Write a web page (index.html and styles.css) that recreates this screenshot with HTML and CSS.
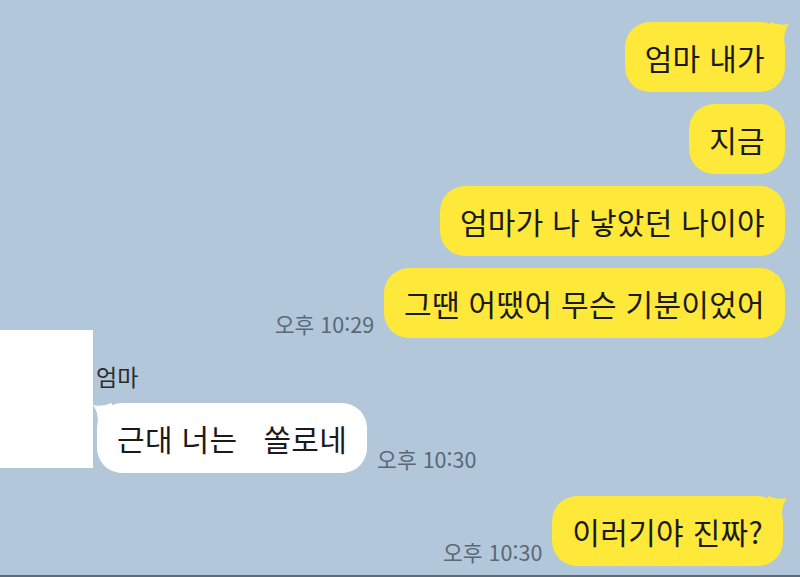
FILE: index.html
```html
<!DOCTYPE html>
<html lang="ko">

<head>
	<meta charset="UTF-8">
	<meta name="viewport" content="width=device-width, initial-scale=1.0">
	<title>채팅</title>
	<link rel="stylesheet" href="styles.css">
</head>

<body>
	<div class="screen">
		<div class="row me">
			<div class="bubble yellow tail">엄마 내가<svg class="horn" viewBox="0 0 20 20"><path d="M0 0 Q10 4 19 2 Q14 8 14 20 L0 20 Z"/></svg></div>
		</div>
		<div class="row me">
			<div class="bubble yellow">지금</div>
		</div>
		<div class="row me">
			<div class="bubble yellow">엄마가 나 낳았던 나이야</div>
		</div>
		<div class="row me">
			<span class="time">오후 10:29</span>
			<div class="bubble yellow">그땐 어땠어 무슨 기분이었어</div>
		</div>

		<div class="other">
			<div class="avatar"></div>
			<div class="other-body">
				<div class="name">엄마</div>
				<div class="row you">
					<div class="bubble white tail">근대 너는   쏠로네<svg class="horn" viewBox="0 0 20 20"><path d="M0 0 Q10 4 19 2 Q14 8 14 20 L0 20 Z"/></svg></div>
					<span class="time">오후 10:30</span>
				</div>
			</div>
		</div>

		<div class="row me last">
			<span class="time">오후 10:30</span>
			<div class="bubble yellow tail">이러기야 진짜?<svg class="horn" viewBox="0 0 20 20"><path d="M0 0 Q10 4 19 2 Q14 8 14 20 L0 20 Z"/></svg></div>
		</div>
	</div>
</body>

</html>
```

FILE: styles.css
```css
* {
	box-sizing: border-box;
}

body {
	margin: 0;
	background-color: #b2c7d9;
	font-family: "Noto Sans CJK KR", "Noto Sans", sans-serif;
	overflow: hidden;
}

.screen {
	width: 800px;
	height: 577px;
	padding-top: 22px;
	border-bottom: 2px solid #5d6b78;
	display: flex;
	flex-direction: column;
	overflow: hidden;
}

.row {
	display: flex;
	align-items: flex-end;
	gap: 10px;
}

.me {
	justify-content: flex-end;
	padding-right: 15px;
	margin-bottom: 12px;
}

.me.last {
	margin-top: 23px;
	padding-right: 17px;
}

.bubble {
	position: relative;
	height: 70px;
	padding: 0 20px;
	border-radius: 25px;
	font-size: 30px;
	letter-spacing: 0.3px;
	line-height: 70px;
	color: #1a1a1a;
	white-space: pre;
}

.yellow {
	background-color: #fee839;
	fill: #fee839;
}

.white {
	background-color: #ffffff;
	fill: #ffffff;
}

.horn {
	position: absolute;
	top: 0;
	right: -5px;
	width: 20px;
	height: 20px;
}

.you .horn {
	right: auto;
	left: -5px;
	transform: scaleX(-1);
}

.time {
	font-size: 21.5px;
	line-height: 24px;
	color: #5a6877;
	padding-bottom: 2px;
}

.other {
	display: flex;
	margin-top: -20px;
}

.avatar {
	width: 93px;
	height: 138px;
	background-color: #ffffff;
}

.other-body {
	padding-left: 4px;
	padding-top: 32px;
}

.name {
	font-size: 23px;
	line-height: 29px;
	color: #2c2c2c;
	margin-left: -1px;
	margin-bottom: 12px;
}
```
